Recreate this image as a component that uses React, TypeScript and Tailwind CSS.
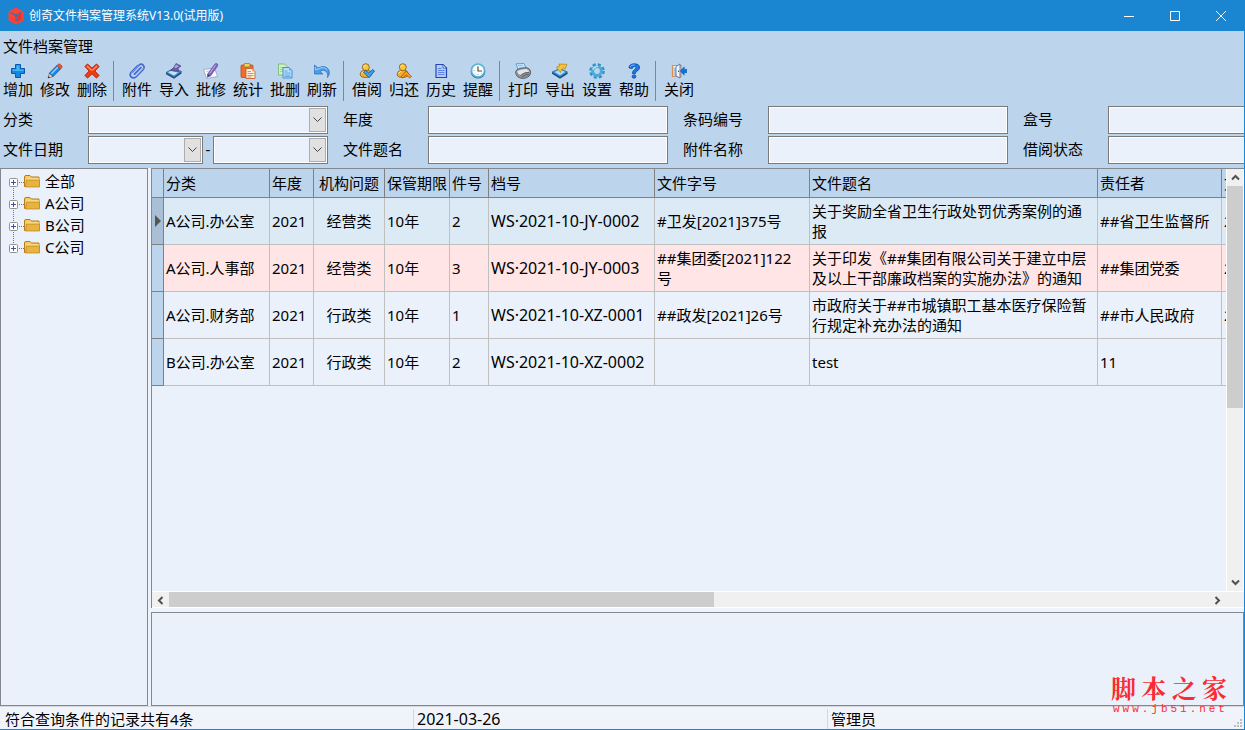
import type { ReactNode } from "react";

type Tool = { label: string; icon: ReactNode };

type FileRecord = {
  category: string;
  year: string;
  issue: string;
  keep: string;
  piece: string;
  code: string;
  docNo: string;
  title: string;
  owner: string;
  date: string;
  tone: string;
};

const toolGroups: Tool[][] = [
  [
    {
      label: "增加",
      icon: (
        <>
          <path d="M5.500 1.500h5v4h4v5h-4v4h-5v-4h-4v-5h4z" fill="#1487e0" stroke="#0a58ae" />
          <path d="M6.500 2.500h3v4h4v1.500h-11v-1.500h4z" fill="#43b4f6" />
        </>
      ),
    },
    {
      label: "修改",
      icon: (
        <>
          <path d="M1 15l1.500-5 3.500 3.500z" fill="#f4dcae" stroke="#4a4a58" strokeWidth=".6" />
          <path d="M1 15l.6-2 1.400 1.400z" fill="#222" />
          <path d="M2.500 10L10 2.500l3.500 3.500L6 13.500z" fill="#1b86e4" stroke="#0b4a9c" strokeWidth=".8" />
          <path d="M3.800 10.200L10.500 3.500l1 1-6.700 6.700z" fill="#8fd2fb" />
          <path d="M10 2.500l1.200-1.200q1-.8 2 0l1.500 1.500q.8 1 0 2L13.500 6z" fill="#f0552f" stroke="#a53a20" strokeWidth=".7" />
        </>
      ),
    },
    {
      label: "删除",
      icon: (
        <>
          <path d="M1 3.500L3.500 1 8 5.200 12.500 1 15 3.500 10.800 8 15 12.500 12.500 15 8 10.800 3.500 15 1 12.500 5.200 8z" fill="#f53b12" stroke="#b51d06" />
          <path d="M2.500 3.500l1-1L8 6.700l4.500-4.200 1 1L9.200 7.500H6.700z" fill="#ff9263" />
        </>
      ),
    },
  ],
  [
    {
      label: "附件",
      icon: (
        <g fill="none" strokeLinecap="round">
          <path d="M3.500 9L10 2.200q2.200-2 4.200 0 1.800 2 0 4.200L7 13.800q-2.500 2-4.800.2-2-2.300 0-4.800L8.500 2.800M5.500 11.200L12 4.500" stroke="#4468d4" strokeWidth="1.700" />
          <path d="M2.800 9.500L9.800 2.500M14.200 5.500l-7.200 7.700" stroke="#a9c0fb" strokeWidth=".7" />
        </g>
      ),
    },
    {
      label: "导入",
      icon: (
        <>
          <path d="M0 9.500l8-4.500 7.500 3.500L8 14z" fill="#4a8fd4" stroke="#2d5a8e" strokeWidth=".6" />
          <path d="M0 9.500L8 14v1.700L0 11.200zM8 14l7.500-5.500v2L8 15.700z" fill="#1b4f86" />
          <path d="M2 9.300L8 6.200l5 2.500L8 12.500z" fill="#bfe5fa" />
          <path d="M10 .5l5 2.500-3 2.500.5 3.500-8-1.500L6.500 6 8 4z" fill="#665fa8" stroke="#3c386f" strokeWidth=".6" />
          <path d="M10 1.500l3.200 1.700-3.500 2-1.500-.7z" fill="#aaa4dc" />
        </>
      ),
    },
    {
      label: "批修",
      icon: (
        <>
          <path d="M.5 6.500l11-1.500 3 8.500L3.500 15.500z" fill="#f8faff" stroke="#8c9ab8" strokeWidth=".7" />
          <path d="M3 8.500l5-.7M4 10.500l3-.5" stroke="#aab6d0" strokeWidth=".7" />
          <path d="M4.500 11.500l3 1.500 7-10q.8-2-.8-2.500-1.500-.2-2.200 1z" fill="#8668c4" stroke="#5a4494" strokeWidth=".7" />
          <path d="M4.500 11.500l3 1.500-3.500 1.500z" fill="#3c2d63" />
          <path d="M7 10l5.500-8" stroke="#cbb9ee" strokeWidth=".9" />
        </>
      ),
    },
    {
      label: "统计",
      icon: (
        <>
          <rect x="1" y="2" width="12" height="12.500" rx="1" fill="#ee6f2d" stroke="#b84a17" strokeWidth=".8" />
          <rect x="4" y=".5" width="6" height="3.500" rx="1" fill="#f6d254" stroke="#8f6a1e" strokeWidth=".7" />
          <path d="M6 5.500h6l3 3v7H6z" fill="#fff1df" stroke="#bf5423" strokeWidth=".8" />
          <path d="M12 5.500v3h3z" fill="#f2ae7a" />
          <path d="M7.500 8.500h3.500M7.500 10.500h6M7.500 12.500h6M7.500 14h4" stroke="#e2743a" strokeWidth=".8" />
        </>
      ),
    },
    {
      label: "批删",
      icon: (
        <>
          <path d="M1.500 1h6l2.500 2.500V12H1.500z" fill="#d3f2c4" stroke="#6cb56c" strokeWidth=".8" />
          <path d="M3 4.500h4M3 6.500h3M3 8.500h3" stroke="#8fd080" strokeWidth=".8" />
          <path d="M6 4.500h6l3 3V15H6z" fill="#b9dffb" stroke="#3278c6" strokeWidth=".8" />
          <path d="M12 4.500v3h3z" fill="#64a8e4" />
          <path d="M7.500 8h3M7.500 10h6M7.500 12h6M7.500 13.500h6" stroke="#4d9be0" strokeWidth=".8" />
        </>
      ),
    },
    {
      label: "刷新",
      icon: (
        <>
          <path d="M.5 2v9h8.300L6 8.300q4-2.500 7 1.200 1.200 2 .5 5 2.800-3.500 1.500-7Q12 1 4 5z" fill="#4c9ce8" stroke="#286bb8" strokeWidth=".7" />
          <path d="M1.300 4v2.800L4 6.200q6-3.500 9.500.8" fill="none" stroke="#a7d6fb" strokeWidth=".9" />
        </>
      ),
    },
  ],
  [
    {
      label: "借阅",
      icon: (
        <>
          <PersonShape />
          <path d="M4.500 9l2.200-1.700 3 2.700 4-3.500L15.500 8 10 14.700z" fill="#3ba4f4" stroke="#0e4c94" strokeWidth=".8" />
        </>
      ),
    },
    {
      label: "归还",
      icon: (
        <>
          <PersonShape />
          <path d="M5 14L10 8l5.500 5.500-1.700 1.500L10 11.800 7 15z" fill="#fb9d23" stroke="#a3510c" strokeWidth=".8" />
        </>
      ),
    },
    {
      label: "历史",
      icon: (
        <>
          <path d="M3 1.500h7L13.500 5v9.500H3z" fill="#b4cbfb" stroke="#2446b4" strokeWidth="1.200" />
          <path d="M10 1.500V5h3.500z" fill="#fff" stroke="#2446b4" strokeWidth=".8" />
          <path d="M5 5.500h3.500M5 7.500h6.500M5 9.500h6.500M5 11.500h6.500" stroke="#4a74dc" strokeWidth=".8" />
        </>
      ),
    },
    {
      label: "提醒",
      icon: (
        <>
          <ellipse cx="8" cy="9" rx="7.300" ry="6.500" fill="#1d6f9f" />
          <circle cx="8" cy="7.500" r="6.500" fill="#f4fcff" stroke="#5cb2d5" strokeWidth="1.600" />
          <path d="M8 3.500v4.500h4" fill="none" stroke="#6c4a2a" strokeWidth="1.200" />
          <path d="M3.500 7.500h1M8 11v1M11.500 10.500l.5.5" stroke="#7199b0" strokeWidth=".8" />
        </>
      ),
    },
  ],
  [
    {
      label: "打印",
      icon: (
        <>
          <path d="M1 .8l8-.3 2.500 5.500-8 1z" fill="#d5edff" stroke="#3d8cd4" strokeWidth=".8" />
          <path d="M3 2.500l5-.3M4 4.300l5-.3" stroke="#65ade8" strokeWidth=".7" />
          <path d="M.5 9q1-3 4-3.500l7-1q4 1 4.200 4.500.2 5-7 6.500Q1 15.500.5 9z" fill="#8f959c" stroke="#4d5157" strokeWidth=".8" />
          <path d="M2 8.500Q5 6 11 6q3 .5 3.500 2.500Q9 9 5.500 12 3 11 2 8.500z" fill="#e2e5e8" />
          <path d="M5.500 12.500q3-3 8.500-3.200M7 14q3-2.500 7-2.700" fill="none" stroke="#55595f" strokeWidth=".9" />
        </>
      ),
    },
    {
      label: "导出",
      icon: (
        <>
          <path d="M0 9l8-3.500L15.500 9 8 14z" fill="#3c8fd9" stroke="#285c91" strokeWidth=".6" />
          <path d="M0 9l8 5v1.700L0 10.700zM8 14l7.500-5v2L8 15.700z" fill="#174f87" />
          <path d="M2.500 9L8 6.500 13 9l-5 3.300z" fill="#a9e0fc" />
          <path d="M4.500 4L8 3 6.800 1l8.200.3-2 5-1.300-1.500Q9 6 8.500 9.500q-2-2-4-5.500z" fill="#fbc333" stroke="#a77512" strokeWidth=".6" />
        </>
      ),
    },
    {
      label: "设置",
      icon: (
        <>
          <circle cx="8" cy="8" r="6.300" fill="none" stroke="#2f8fc6" strokeWidth="3" strokeDasharray="2.900 2.050" />
          <circle cx="8" cy="8" r="4.400" fill="none" stroke="#4fa9da" strokeWidth="3" />
          <path d="M3.800 6.800Q5.200 3.300 9 3.300" fill="none" stroke="#b5e6fb" strokeWidth="1.400" />
        </>
      ),
    },
    {
      label: "帮助",
      icon: (
        <>
          <path d="M3 5Q3 .8 8.500.8 14 1 13.500 5q-.2 2-2.700 3.300-1.300.8-1.300 2.200h-3Q6.300 8 8 7q2-1.200 2-2.300Q10 3.500 8.300 3.500q-1.800 0-2 2z" fill="#1e7ae4" stroke="#0c429d" strokeWidth=".8" />
          <ellipse cx="8" cy="13.500" rx="1.900" ry="1.700" fill="#1e7ae4" stroke="#0c429d" strokeWidth=".8" />
          <path d="M4 4Q5 1.700 8.500 1.800" fill="none" stroke="#85c3fb" strokeWidth=".9" />
        </>
      ),
    },
  ],
  [
    {
      label: "关闭",
      icon: (
        <>
          <path d="M1.500 2.500h8.500v11H1.500z" fill="#fff" stroke="#e08d45" strokeWidth="1.200" />
          <path d="M2.200 3.500L5 5v8.500l-2.800-1z" fill="#a9c9ee" />
          <path d="M5 3.500L9 1v14l-4-2z" fill="#f4f8fd" stroke="#4a6ea8" strokeWidth=".9" />
          <path d="M7.500 7.500v1.500" stroke="#33507e" />
          <path d="M15.800 6.300h-2.600V3.800L9.300 8l3.900 4.200V9.700h2.600z" fill="#1470dc" stroke="#0d57b0" strokeWidth=".5" />
        </>
      ),
    },
  ],
];

const folders = ["全部", "A公司", "B公司", "C公司"];

const columns = [
  { label: "分类", width: "w-[106px]" },
  { label: "年度", width: "w-[44px]" },
  { label: "机构问题", width: "w-[71px]" },
  { label: "保管期限", width: "w-[65px]" },
  { label: "件号", width: "w-[39px]" },
  { label: "档号", width: "w-[166px]" },
  { label: "文件字号", width: "w-[155px]" },
  { label: "文件题名", width: "w-[288px]" },
  { label: "责任者", width: "w-[124px]" },
  { label: "文件日期", width: "" },
];

const records: FileRecord[] = [
  {
    category: "A公司.办公室",
    year: "2021",
    issue: "经营类",
    keep: "10年",
    piece: "2",
    code: "WS·2021-10-JY-0002",
    docNo: "#卫发[2021]375号",
    title: "关于奖励全省卫生行政处罚优秀案例的通报",
    owner: "##省卫生监督所",
    date: "2021",
    tone: "bg-[#dceaf5]",
  },
  {
    category: "A公司.人事部",
    year: "2021",
    issue: "经营类",
    keep: "10年",
    piece: "3",
    code: "WS·2021-10-JY-0003",
    docNo: "##集团委[2021]122号",
    title: "关于印发《##集团有限公司关于建立中层及以上干部廉政档案的实施办法》的通知",
    owner: "##集团党委",
    date: "2021",
    tone: "bg-[#ffe5e5]",
  },
  {
    category: "A公司.财务部",
    year: "2021",
    issue: "行政类",
    keep: "10年",
    piece: "1",
    code: "WS·2021-10-XZ-0001",
    docNo: "##政发[2021]26号",
    title: "市政府关于##市城镇职工基本医疗保险暂行规定补充办法的通知",
    owner: "##市人民政府",
    date: "2021",
    tone: "bg-[#eaf1fa]",
  },
  {
    category: "B公司.办公室",
    year: "2021",
    issue: "行政类",
    keep: "10年",
    piece: "2",
    code: "WS·2021-10-XZ-0002",
    docNo: "",
    title: "test",
    owner: "11",
    date: "",
    tone: "bg-[#eaf1fa]",
  },
];

function PersonShape() {
  return (
    <>
      <path d="M1 12q0-4 4-5h4q3 1 3.500 4 0 3-5.500 3.500-5 .3-6-2.500z" fill="#f3b02c" stroke="#80591a" strokeWidth=".8" />
      <circle cx="6.800" cy="4.200" r="3.500" fill="#f9c63c" stroke="#80591a" strokeWidth=".8" />
      <path d="M4.800 3.800q.5-1.500 2-1.700M2.500 10.500Q3.500 8.500 5 8.300" fill="none" stroke="#fff0a8" />
    </>
  );
}

function TitleBar() {
  const control = "flex h-full w-[46px] items-center justify-center";
  return (
    <header className="flex h-[31px] shrink-0 items-center bg-[#1a85d0] pl-2 text-white">
      <svg width="16" height="18" viewBox="0 0 16 18" aria-hidden="true">
        <path d="M8 .5L15.500 4.500v9L8 17.500.5 13.500v-9z" fill="#fb4338" />
        <path d="M2.500 5.500L8 8.500l5.500-3M8 8.500v6" fill="none" stroke="#1a78bd" strokeWidth="1.300" />
        <path d="M9 9.300l4.500-2.500v5.700L9 15z" fill="#e2352f" />
      </svg>
      <h1 className="ml-[5px] flex-1 text-xs">创奇文件档案管理系统V13.0(试用版)</h1>
      <button type="button" aria-label="最小化" className={control}>
        <svg width="10" height="10" stroke="#fff"><path d="M0 5.500h10" /></svg>
      </button>
      <button type="button" aria-label="最大化" className={control}>
        <svg width="10" height="10" stroke="#fff" fill="none"><path d="M.5.5h9v9h-9z" /></svg>
      </button>
      <button type="button" aria-label="退出" className={control}>
        <svg width="10" height="10" stroke="#fff"><path d="M0 0l10 10M10 0L0 10" /></svg>
      </button>
    </header>
  );
}

function Toolbar() {
  return (
    <div role="toolbar" className="flex h-[42px] shrink-0">
      {toolGroups.map((group, i) => (
        <div key={i} className="flex">
          {i > 0 && <div className="mt-px mr-[5px] ml-0.5 h-10 w-px bg-[#7f8791]" />}
          {group.map((tool) => (
            <button key={tool.label} type="button" className="flex w-[37px] flex-col items-center pt-[3px] pr-px whitespace-nowrap">
              <svg width="16" height="16" viewBox="0 0 16 16" aria-hidden="true">{tool.icon}</svg>
              <span>{tool.label}</span>
            </button>
          ))}
        </div>
      ))}
    </div>
  );
}

const boxClass = "h-7 min-w-0 rounded-none border border-[#7a7a7a] bg-[#eaf1fa] shadow-[inset_0_0_0_1px_#fff] outline-none";
const labelClass = "w-[85px] pb-0.5";

function TextField({ id, label }: { id: string; label: string }) {
  return (
    <div className="flex items-center">
      <label htmlFor={id} className={labelClass}>{label}</label>
      <input id={id} type="text" className={`${boxClass} w-[240px] px-1`} />
    </div>
  );
}

function ComboBox({ id, label, width }: { id: string; label?: string; width: string }) {
  return (
    <div className={`relative flex ${width}`}>
      <select id={id} aria-label={label} className={`${boxClass} w-full appearance-none px-1`}>
        <option value="" />
      </select>
      <span className="pointer-events-none absolute inset-y-0.5 right-0.5 flex w-[17px] items-center justify-center border border-[#adadad] bg-[#e1e1e1]">
        <svg width="9" height="6" fill="none" stroke="#444"><path d="M.5.5l4 4 4-4" /></svg>
      </span>
    </div>
  );
}

function Filters() {
  return (
    <form className="grid shrink-0 grid-cols-[repeat(4,325px)] gap-x-[15px] gap-y-0.5 overflow-hidden pt-1 pb-1 pl-[3px]">
      <div className="flex items-center">
        <label htmlFor="category" className={labelClass}>分类</label>
        <ComboBox id="category" width="w-[240px]" />
      </div>
      <TextField id="year" label="年度" />
      <TextField id="barcode" label="条码编号" />
      <TextField id="box" label="盒号" />
      <div className="flex items-center">
        <label htmlFor="date-from" className={labelClass}>文件日期</label>
        <ComboBox id="date-from" width="w-[115px]" />
        <span className="w-[10px] pb-0.5 text-center">-</span>
        <ComboBox id="date-to" label="截止日期" width="w-[115px]" />
      </div>
      <TextField id="title" label="文件题名" />
      <TextField id="attachment" label="附件名称" />
      <TextField id="borrow" label="借阅状态" />
    </form>
  );
}

function FolderTree() {
  return (
    <nav className="w-[148px] shrink-0 border border-[#828790] bg-[#eaf1fa] pt-px">
      <ul>
        {folders.map((name, i) => (
          <li key={name} className="flex h-[22px] items-center pl-2">
            <svg width="31" height="22" viewBox="0 0 31 22" aria-hidden="true">
              <path
                d={i === 0 ? "M4.500 16v6" : i === folders.length - 1 ? "M4.500 0v7" : "M4.500 0v7M4.500 16v6"}
                stroke="#777"
                strokeDasharray="1 1"
              />
              <path d="M10 12.500h5" stroke="#777" strokeDasharray="1 1" />
              <rect x=".5" y="8.500" width="8" height="8" rx="1" fill="#fff" stroke="#919191" />
              <path d="M2 12.500h5M4.500 10v5" stroke="#3a55a8" />
              <path d="M15.500 16.500V7q0-1.500 1.500-1.500h4l1.500 1.500h7.500v9.500z" fill="#f5cf66" stroke="#b47a1e" />
              <path d="M18 8.500h12v8H17z" fill="#fbe3a0" />
              <path d="M17.500 10h13v7H16.500z" fill="#e9b340" stroke="#b8811f" strokeWidth=".7" />
            </svg>
            <button type="button" className="ml-[5px]">{name}</button>
          </li>
        ))}
      </ul>
    </nav>
  );
}

function ScrollButton({ label, d }: { label: string; d: string }) {
  return (
    <button type="button" aria-label={label} className="flex size-[17px] shrink-0 items-center justify-center pr-px pb-px">
      <svg width="9" height="9" viewBox="0 0 9 9" fill="none" stroke="#505050" strokeWidth="2"><path d={d} /></svg>
    </button>
  );
}

function RecordGrid() {
  const cell = "border-r border-b border-[#c0c0c0] py-0 pr-1 pl-0.5";
  return (
    <div className="flex min-h-0 flex-1 flex-col border-t border-l border-[#828790] bg-[#f0f0f0]">
      <div className="flex min-h-0 flex-1">
        <div className="min-w-0 flex-1 overflow-hidden bg-[#eaf1fa]">
          <table className="w-full table-fixed border-separate border-spacing-0 text-left">
            <colgroup>
              <col className="w-3" />
              {columns.map((c) => <col key={c.label} className={c.width} />)}
            </colgroup>
            <thead>
              <tr className="h-[29px] bg-[#bcd4ec]">
                <td className="border-r border-b border-[#808080] p-0" />
                {columns.map((c) => (
                  <th
                    key={c.label}
                    className={`overflow-hidden border-b border-[#808080] py-0 font-normal whitespace-nowrap ${c.width && "border-r"} ${c.label === "机构问题" ? "text-center" : "pl-0.5"}`}
                  >
                    {c.label}
                  </th>
                ))}
              </tr>
            </thead>
            <tbody>
              {records.map((r, i) => (
                <tr key={r.code} className={`h-[47px] ${r.tone}`}>
                  <td className={`border-r border-b border-[#808080] p-0 ${i === 0 ? "bg-[#a9bfd6]" : "bg-[#bcd4ec]"}`}>
                    {i === 0 && (
                      <svg width="11" height="12" className="block"><path d="M3 0l6 6-6 6z" fill="#555" /></svg>
                    )}
                  </td>
                  <td className={cell}>{r.category}</td>
                  <td className={cell}>{r.year}</td>
                  <td className="border-r border-b border-[#c0c0c0] p-0 text-center">{r.issue}</td>
                  <td className={cell}>{r.keep}</td>
                  <td className={cell}>{r.piece}</td>
                  <td className={`${cell} text-base leading-5 whitespace-nowrap`}>{r.code}</td>
                  <td className={cell}>{r.docNo}</td>
                  <td className={cell}>{r.title}</td>
                  <td className={cell}>{r.owner}</td>
                  <td className="overflow-hidden border-b border-[#c0c0c0] py-0 pl-0.5 whitespace-nowrap">{r.date}</td>
                </tr>
              ))}
            </tbody>
          </table>
        </div>
        <div className="flex w-[18px] shrink-0 flex-col border-x border-white">
          <ScrollButton label="向上滚动" d="M1 6.500L4.500 3 8 6.500" />
          <div className="min-h-0 flex-1">
            <div className="h-[222px] max-h-full w-full bg-[#cdcdcd]" />
          </div>
          <ScrollButton label="向下滚动" d="M1 2.500L4.500 6 8 2.500" />
        </div>
      </div>
      <div className="flex h-[17px] shrink-0 border-y border-white pr-[18px]">
        <ScrollButton label="向左滚动" d="M6.500 1L3 4.500 6.500 8" />
        <div className="min-w-0 flex-1">
          <div className="h-full w-[545px] max-w-full bg-[#cdcdcd]" />
        </div>
        <ScrollButton label="向右滚动" d="M2.500 1L6 4.500 2.500 8" />
      </div>
    </div>
  );
}

function Watermark() {
  return (
    <div className="pointer-events-none absolute right-[17px] bottom-[12px] w-[116px] text-[#fb2b32]">
      <div className="flex justify-between font-[Noto_Serif_CJK_SC,Noto_Sans_CJK_SC,serif] text-[25px] leading-[28px] font-bold">
        {[..."脚本之家"].map((ch) => <span key={ch}>{ch}</span>)}
      </div>
      <div className="flex justify-between px-0.5 font-[Liberation_Mono,monospace] text-[11px] leading-4">
        {[..."www.jb51.net"].map((ch, i) => <span key={i}>{ch}</span>)}
      </div>
    </div>
  );
}

function StatusBar() {
  return (
    <footer className="flex h-[23px] shrink-0 items-center border-t border-[#d4d7dc] bg-[#f0f4fa] pt-0.5">
      <div className="flex w-1/3 max-w-[414px] items-center self-stretch border-r border-[#d4d7dc] pl-[5px]">符合查询条件的记录共有4条</div>
      <div className="flex w-1/3 max-w-[414px] items-center self-stretch border-r border-[#d4d7dc] pl-[3px] text-base leading-5">2021-03-26</div>
      <div className="flex flex-1 items-center self-stretch pl-[3px]">
        <span className="flex-1">管理员</span>
        <svg width="10" height="10" className="self-end" fill="#bfbfbf" aria-hidden="true">
          <path d="M6 0h2v2h-2zM3 3h2v2h-2zM6 3h2v2h-2zM0 6h2v2h-2zM3 6h2v2h-2zM6 6h2v2h-2z" />
        </svg>
      </div>
    </footer>
  );
}

export default function App() {
  return (
    <div className="relative flex h-screen flex-col overflow-hidden border-r border-b border-[#1a85d0] bg-[#bcd4ec] font-[Noto_Sans,Noto_Sans_CJK_SC,sans-serif] text-[15px] leading-5 text-black">
      <TitleBar />
      <div className="flex h-[29px] shrink-0 items-center pl-[3px]">
        <button type="button">文件档案管理</button>
      </div>
      <Toolbar />
      <Filters />
      <main className="flex min-h-0 flex-1 gap-[3px] bg-[#eef4fb]">
        <FolderTree />
        <div className="flex min-w-0 flex-1 flex-col gap-1">
          <RecordGrid />
          <section aria-label="附件列表" className="h-[94px] shrink-0 border border-[#828790] bg-[#eaf1fa]" />
        </div>
      </main>
      <StatusBar />
      <Watermark />
    </div>
  );
}
